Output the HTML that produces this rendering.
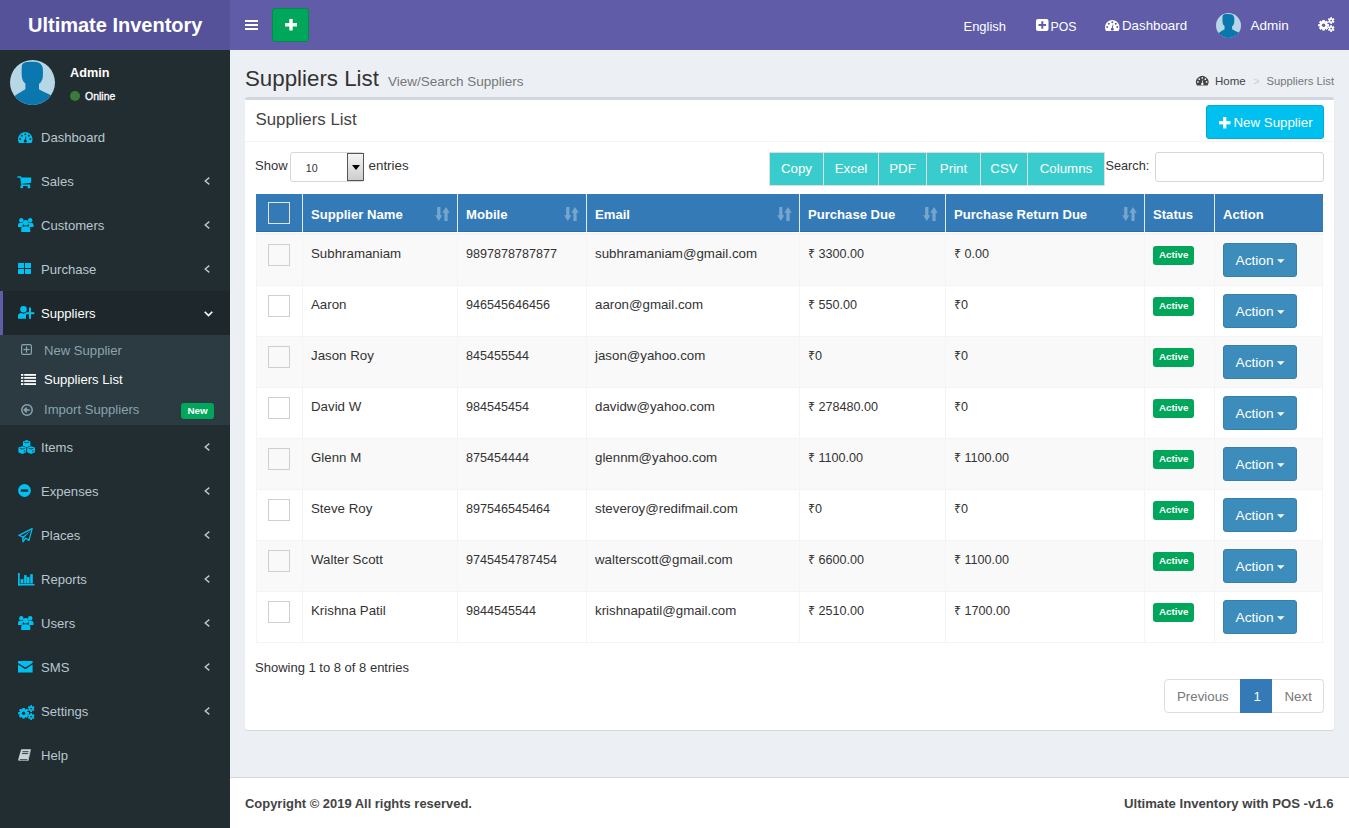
<!DOCTYPE html>
<html><head><meta charset="utf-8">
<style>
*{box-sizing:border-box;margin:0;padding:0}
html,body{width:1349px;height:828px;overflow:hidden}
body{position:relative;background:#ecf0f5;font-family:"Liberation Sans",sans-serif;color:#333;font-size:13px}
.a{position:absolute;white-space:nowrap}
svg.a{display:block;overflow:visible}
</style></head><body>

<div class="a" style="left:0px;top:0px;width:230px;height:50px;background:#555299"></div>
<div class="a" style="left:230px;top:0px;width:1119px;height:50px;background:#605ca8"></div>
<div class="a" style="left:28.00px;top:14.87px;font-size:20px;line-height:20px;color:#fff;font-weight:bold;">Ultimate Inventory</div>
<svg class="a" style="left:245px;top:20px;" width="13" height="10" viewBox="0 0 13 10"><g fill="#fff"><rect x="0" y="0" width="13" height="2"/><rect x="0" y="4" width="13" height="2"/><rect x="0" y="8" width="13" height="2"/></g></svg>
<div class="a" style="left:272px;top:8px;width:37px;height:34px;background:#00a65a;border:1px solid #008d4c;border-radius:3px"></div>
<svg class="a" style="left:285px;top:19px;" width="12" height="11.5" viewBox="0 0 12 11.5"><g fill="#fff"><rect x="4.3" y="0" width="3.4" height="11.5"/><rect x="0" y="4.1" width="12" height="3.4"/></g></svg>
<div class="a" style="left:963.50px;top:16.51px;font-size:12.95px;line-height:20px;color:#fff;font-weight:normal;">English</div>
<svg class="a" style="left:1035.5px;top:19px;" width="12.5" height="12" viewBox="0 0 12.5 12"><rect x="0" y="0" width="12.5" height="12" rx="2" fill="#fff"/><g fill="#605ca8"><rect x="5.3" y="2.3" width="2" height="7.4"/><rect x="2.5" y="5" width="7.5" height="2"/></g></svg>
<div class="a" style="left:1050.50px;top:16.74px;font-size:12.3px;line-height:20px;color:#fff;font-weight:normal;">POS</div>
<svg class="a" style="left:1105px;top:20px;" width="14.5" height="11" viewBox="0 0 14.5 11"><path d="M1.05 11 A7.25 7.25 0 1 1 13.45 11 Z" fill="#fff"/><g fill="#605ca8"><circle cx="7.3" cy="2.2" r="1"/><circle cx="3.8" cy="3.7" r="1"/><circle cx="10.8" cy="3.7" r="1"/><circle cx="2.2" cy="6.9" r="1"/><circle cx="12.3" cy="6.9" r="1"/><path d="M8.3 4.4 L7.8 4.3 L6.7 8.6 L7.9 8.9 Z"/><circle cx="7.3" cy="9.2" r="1.45"/></g></svg>
<div class="a" style="left:1122.00px;top:16.39px;font-size:13.3px;line-height:20px;color:#fff;font-weight:normal;">Dashboard</div>
<svg class="a" style="left:1216px;top:13px;" width="25" height="25" viewBox="0 0 45 45"><defs><clipPath id="cpa"><circle cx="22.5" cy="22.5" r="22.5"/></clipPath></defs><circle cx="22.5" cy="22.5" r="22.5" fill="#b7d7e6"/><g clip-path="url(#cpa)" fill="#0a77ae"><path d="M12 5 C13 2.5 16 1.8 22 1.8 C28 1.8 31 3 32.5 7 C33.2 10 33 14 32.8 17 C32.5 20 31 22.5 29 24 L29 29.3 C32 31.5 37 33 41 35.3 L50 50 L-5 50 L4.8 35.9 C8 33.5 12 31.5 15.4 29.3 L15.4 23.5 C13 21.5 12 19 11.8 16 C11.5 12 11.5 8 12 5 Z"/></g></svg>
<div class="a" style="left:1250.50px;top:16.32px;font-size:13.5px;line-height:20px;color:#fff;font-weight:normal;">Admin</div>
<svg class="a" style="left:1318px;top:17px;" width="17" height="15" viewBox="0 0 17 15"><circle cx="5.6" cy="8.2" r="4.0" fill="#fff"/><rect x="4.50" y="3.00" width="2.20" height="10.40" fill="#fff" transform="rotate(0.0 5.6 8.2)"/><rect x="4.50" y="3.00" width="2.20" height="10.40" fill="#fff" transform="rotate(45.0 5.6 8.2)"/><rect x="4.50" y="3.00" width="2.20" height="10.40" fill="#fff" transform="rotate(90.0 5.6 8.2)"/><rect x="4.50" y="3.00" width="2.20" height="10.40" fill="#fff" transform="rotate(135.0 5.6 8.2)"/><rect x="4.50" y="3.00" width="2.20" height="10.40" fill="#fff" transform="rotate(180.0 5.6 8.2)"/><rect x="4.50" y="3.00" width="2.20" height="10.40" fill="#fff" transform="rotate(225.0 5.6 8.2)"/><rect x="4.50" y="3.00" width="2.20" height="10.40" fill="#fff" transform="rotate(270.0 5.6 8.2)"/><rect x="4.50" y="3.00" width="2.20" height="10.40" fill="#fff" transform="rotate(315.0 5.6 8.2)"/><circle cx="5.6" cy="8.2" r="1.7" fill="#605ca8"/><circle cx="13.2" cy="3.6" r="2.4" fill="#fff"/><rect x="12.50" y="0.30" width="1.40" height="6.60" fill="#fff" transform="rotate(0.0 13.2 3.6)"/><rect x="12.50" y="0.30" width="1.40" height="6.60" fill="#fff" transform="rotate(60.0 13.2 3.6)"/><rect x="12.50" y="0.30" width="1.40" height="6.60" fill="#fff" transform="rotate(120.0 13.2 3.6)"/><rect x="12.50" y="0.30" width="1.40" height="6.60" fill="#fff" transform="rotate(180.0 13.2 3.6)"/><rect x="12.50" y="0.30" width="1.40" height="6.60" fill="#fff" transform="rotate(240.0 13.2 3.6)"/><rect x="12.50" y="0.30" width="1.40" height="6.60" fill="#fff" transform="rotate(300.0 13.2 3.6)"/><circle cx="13.2" cy="3.6" r="0.9" fill="#605ca8"/><circle cx="13.2" cy="11.6" r="2.4" fill="#fff"/><rect x="12.50" y="8.30" width="1.40" height="6.60" fill="#fff" transform="rotate(0.0 13.2 11.6)"/><rect x="12.50" y="8.30" width="1.40" height="6.60" fill="#fff" transform="rotate(60.0 13.2 11.6)"/><rect x="12.50" y="8.30" width="1.40" height="6.60" fill="#fff" transform="rotate(120.0 13.2 11.6)"/><rect x="12.50" y="8.30" width="1.40" height="6.60" fill="#fff" transform="rotate(180.0 13.2 11.6)"/><rect x="12.50" y="8.30" width="1.40" height="6.60" fill="#fff" transform="rotate(240.0 13.2 11.6)"/><rect x="12.50" y="8.30" width="1.40" height="6.60" fill="#fff" transform="rotate(300.0 13.2 11.6)"/><circle cx="13.2" cy="11.6" r="0.9" fill="#605ca8"/></svg>
<div class="a" style="left:0px;top:50px;width:230px;height:778px;background:#222d32"></div>
<svg class="a" style="left:10px;top:60px;" width="45" height="45" viewBox="0 0 45 45"><defs><clipPath id="cpb"><circle cx="22.5" cy="22.5" r="22.5"/></clipPath></defs><circle cx="22.5" cy="22.5" r="22.5" fill="#b7d7e6"/><g clip-path="url(#cpb)" fill="#0a77ae"><path d="M12 5 C13 2.5 16 1.8 22 1.8 C28 1.8 31 3 32.5 7 C33.2 10 33 14 32.8 17 C32.5 20 31 22.5 29 24 L29 29.3 C32 31.5 37 33 41 35.3 L50 50 L-5 50 L4.8 35.9 C8 33.5 12 31.5 15.4 29.3 L15.4 23.5 C13 21.5 12 19 11.8 16 C11.5 12 11.5 8 12 5 Z"/></g></svg>
<div class="a" style="left:70.00px;top:62.60px;font-size:12.7px;line-height:20px;color:#fff;font-weight:bold;">Admin</div>
<svg class="a" style="left:69.5px;top:91px;" width="10" height="10" viewBox="0 0 10 10"><circle cx="5" cy="5" r="5" fill="#3b7a3a"/></svg>
<div class="a" style="left:85.00px;top:86.36px;font-size:10.5px;line-height:20px;color:#fff;font-weight:normal;-webkit-text-stroke:0.3px #fff">Online</div>
<svg class="a" style="left:17.6px;top:132px;" width="14.5" height="11" viewBox="0 0 14.5 11"><path d="M1.05 11 A7.25 7.25 0 1 1 13.45 11 Z" fill="#00c0ef"/><g fill="#222d32"><circle cx="7.3" cy="2.2" r="1"/><circle cx="3.8" cy="3.7" r="1"/><circle cx="10.8" cy="3.7" r="1"/><circle cx="2.2" cy="6.9" r="1"/><circle cx="12.3" cy="6.9" r="1"/><path d="M8.3 4.4 L7.8 4.3 L6.7 8.6 L7.9 8.9 Z"/><circle cx="7.3" cy="9.2" r="1.45"/></g></svg>
<div class="a" style="left:41.00px;top:128.46px;font-size:13.1px;line-height:20px;color:#b8c7ce;font-weight:normal;">Dashboard</div>
<svg class="a" style="left:17px;top:176px;" width="15" height="13" viewBox="0 0 15 13"><path d="M0.4 0.2 H4 L4.4 1.6 H14.2 V6.8 L5.6 7.8 L5.9 8.4 H13.2 V10 H4.6 L3.1 1.7 H0.4 Z" fill="#00c0ef"/><g fill="#00c0ef"><rect x="3.4" y="9.6" width="2.6" height="2.6" rx="0.4"/><rect x="10.6" y="9.6" width="2.6" height="2.6" rx="0.4"/></g></svg>
<div class="a" style="left:41.00px;top:172.46px;font-size:13.1px;line-height:20px;color:#b8c7ce;font-weight:normal;">Sales</div>
<svg class="a" style="left:204.3px;top:177.3px;" width="6" height="8" viewBox="0 0 6 8"><path d="M5.3 0.6 L1.2 4 L5.3 7.4" stroke="#b8c7ce" stroke-width="1.4" fill="none"/></svg>
<svg class="a" style="left:17.8px;top:218px;" width="15.5" height="14" viewBox="0 0 15.5 14"><g fill="#00c0ef"><circle cx="3.3" cy="2.3" r="2.2"/><circle cx="12.2" cy="2.3" r="2.2"/><path d="M0 9 V7 C0 5.3 1 4.8 3.3 4.8 C4.6 4.8 5.2 5 5.5 5.3 C4.9 6.2 4.6 7.2 4.6 9 Z"/><path d="M15.5 9 V7 C15.5 5.3 14.5 4.8 12.2 4.8 C10.9 4.8 10.3 5 10 5.3 C10.6 6.2 10.9 7.2 10.9 9 Z"/><circle cx="7.75" cy="4.8" r="2.8"/><path d="M3.2 14 V11 C3.2 9 4.5 8.2 7.75 8.2 C11 8.2 12.3 9 12.3 11 V14 Z"/></g></svg>
<div class="a" style="left:41.00px;top:216.46px;font-size:13.1px;line-height:20px;color:#b8c7ce;font-weight:normal;">Customers</div>
<svg class="a" style="left:204.3px;top:221.3px;" width="6" height="8" viewBox="0 0 6 8"><path d="M5.3 0.6 L1.2 4 L5.3 7.4" stroke="#b8c7ce" stroke-width="1.4" fill="none"/></svg>
<svg class="a" style="left:18px;top:263px;" width="13" height="11" viewBox="0 0 13 11"><g fill="#00c0ef"><rect x="0" y="0" width="6" height="5"/><rect x="7" y="0" width="6" height="5"/><rect x="0" y="6" width="6" height="5"/><rect x="7" y="6" width="6" height="5"/></g></svg>
<div class="a" style="left:41.00px;top:260.46px;font-size:13.1px;line-height:20px;color:#b8c7ce;font-weight:normal;">Purchase</div>
<svg class="a" style="left:204.3px;top:265.3px;" width="6" height="8" viewBox="0 0 6 8"><path d="M5.3 0.6 L1.2 4 L5.3 7.4" stroke="#b8c7ce" stroke-width="1.4" fill="none"/></svg>
<div class="a" style="left:0px;top:291px;width:230px;height:44px;background:#1e282c;border-left:3px solid #605ca8"></div>
<svg class="a" style="left:17.8px;top:306px;" width="16.4" height="13" viewBox="0 0 16.4 13"><g fill="#00c0ef"><circle cx="5.5" cy="3.3" r="3.3"/><path d="M0 12.8 V10 C0 7.8 1.5 7 3.5 7 L5.5 7.8 L7.5 7 C8.5 7 9 7.2 9.5 7.6 L8 8.5 V12.8 Z"/><rect x="11" y="1.5" width="2" height="11.3"/><rect x="8.1" y="6.2" width="8.2" height="2"/></g></svg>
<div class="a" style="left:41.00px;top:304.46px;font-size:13.1px;line-height:20px;color:#fff;font-weight:normal;">Suppliers</div>
<svg class="a" style="left:203.5px;top:310.5px;" width="9" height="6" viewBox="0 0 9 6"><path d="M0.7 0.8 L4.5 4.6 L8.3 0.8" stroke="#fff" stroke-width="1.6" fill="none"/></svg>
<div class="a" style="left:0px;top:335px;width:230px;height:90px;background:#2c3b41"></div>
<svg class="a" style="left:20.9px;top:344.3px;" width="11" height="11" viewBox="0 0 11 11"><rect x="0.6" y="0.6" width="9.8" height="9.8" rx="1.6" stroke="#8aa4af" stroke-width="1.2" fill="none"/><g fill="#8aa4af"><rect x="4.9" y="2.4" width="1.2" height="6.2"/><rect x="2.4" y="4.9" width="6.2" height="1.2"/></g></svg>
<div class="a" style="left:44.00px;top:340.86px;font-size:13.1px;line-height:20px;color:#8aa4af;font-weight:normal;">New Supplier</div>
<svg class="a" style="left:20.6px;top:374px;" width="15" height="11" viewBox="0 0 15 11"><g fill="#fff"><rect x="0" y="0" width="2.3" height="1.8"/><rect x="3.2" y="0" width="11.8" height="1.8"/><rect x="0" y="3" width="2.3" height="1.8"/><rect x="3.2" y="3" width="11.8" height="1.8"/><rect x="0" y="6.1" width="2.3" height="1.8"/><rect x="3.2" y="6.1" width="11.8" height="1.8"/><rect x="0" y="9.2" width="2.3" height="1.8"/><rect x="3.2" y="9.2" width="11.8" height="1.8"/></g></svg>
<div class="a" style="left:44.00px;top:370.16px;font-size:13.1px;line-height:20px;color:#fff;font-weight:normal;">Suppliers List</div>
<svg class="a" style="left:21px;top:404.3px;" width="12" height="12" viewBox="0 0 12 12"><circle cx="6" cy="6" r="5.2" stroke="#8aa4af" stroke-width="1.5" fill="none"/><path d="M8.8 6 H3.6 M5.8 3.6 L3.4 6 L5.8 8.4" stroke="#8aa4af" stroke-width="1.7" fill="none"/></svg>
<div class="a" style="left:44.00px;top:400.36px;font-size:13.1px;line-height:20px;color:#8aa4af;font-weight:normal;">Import Suppliers</div>
<div class="a" style="left:181px;top:403px;width:33px;height:16px;background:#00a65a;border-radius:3px"></div>
<div class="a" style="left:187.50px;top:401.10px;font-size:9.8px;line-height:20px;color:#fff;font-weight:bold;">New</div>
<svg class="a" style="left:17.8px;top:440px;" width="17.4" height="14" viewBox="0 0 17.4 14"><g fill="#00c0ef"><path d="M8.7 0 L12.4 1.4 V5.8 L8.7 7.2 L5 5.8 V1.4 Z"/><path d="M4.5 6.2 L8.2 7.6 V12.3 L4.5 14 L0.4 12.3 V7.6 Z"/><path d="M12.9 6.2 L17 7.6 V12.3 L12.9 14 L9.2 12.3 V7.6 Z"/></g><g stroke="#222d32" stroke-width="0.9" fill="none"><path d="M6.3 2 L8.7 2.9 L11.1 2"/><path d="M2 8.2 L4.5 9.1 L7 8.2 M6.8 10.3 L6.2 12"/><path d="M10.6 8.2 L13 9.1 L15.5 8.2 M15.2 10.3 L14.6 12"/></g></svg>
<div class="a" style="left:41.00px;top:438.46px;font-size:13.1px;line-height:20px;color:#b8c7ce;font-weight:normal;">Items</div>
<svg class="a" style="left:204.3px;top:443.3px;" width="6" height="8" viewBox="0 0 6 8"><path d="M5.3 0.6 L1.2 4 L5.3 7.4" stroke="#b8c7ce" stroke-width="1.4" fill="none"/></svg>
<svg class="a" style="left:17.6px;top:484px;" width="13" height="13" viewBox="0 0 13 13"><circle cx="6.5" cy="6.5" r="6.4" fill="#00c0ef"/><rect x="2.8" y="5.4" width="7.4" height="2.3" fill="#222d32"/></svg>
<div class="a" style="left:41.00px;top:482.46px;font-size:13.1px;line-height:20px;color:#b8c7ce;font-weight:normal;">Expenses</div>
<svg class="a" style="left:204.3px;top:487.3px;" width="6" height="8" viewBox="0 0 6 8"><path d="M5.3 0.6 L1.2 4 L5.3 7.4" stroke="#b8c7ce" stroke-width="1.4" fill="none"/></svg>
<svg class="a" style="left:17.5px;top:527.8px;" width="15" height="14.4" viewBox="0 0 15 14.4"><path d="M14.2 0.6 L0.9 7.4 L4.6 8.7 L5 13.8 L7.6 10.1 L10.9 12.6 Z" stroke="#00c0ef" stroke-width="1.2" fill="none" stroke-linejoin="round"/><path d="M4.6 8.7 L13 2.5 L5.5 10.3 L5 13.8 Z" fill="#00c0ef"/></svg>
<div class="a" style="left:41.00px;top:526.46px;font-size:13.1px;line-height:20px;color:#b8c7ce;font-weight:normal;">Places</div>
<svg class="a" style="left:204.3px;top:531.3px;" width="6" height="8" viewBox="0 0 6 8"><path d="M5.3 0.6 L1.2 4 L5.3 7.4" stroke="#b8c7ce" stroke-width="1.4" fill="none"/></svg>
<svg class="a" style="left:17.5px;top:572.6px;" width="16.5" height="12.5" viewBox="0 0 16.5 12.5"><g fill="#00c0ef"><rect x="0" y="0" width="1.7" height="12.5"/><rect x="0" y="11" width="16.5" height="1.5"/><rect x="2.6" y="6.1" width="2.9" height="4.4"/><rect x="6.1" y="2.1" width="2.6" height="8.4"/><rect x="9" y="4.1" width="2.6" height="6.4"/><rect x="12.2" y="1.2" width="2.6" height="9.3"/></g></svg>
<div class="a" style="left:41.00px;top:570.46px;font-size:13.1px;line-height:20px;color:#b8c7ce;font-weight:normal;">Reports</div>
<svg class="a" style="left:204.3px;top:575.3px;" width="6" height="8" viewBox="0 0 6 8"><path d="M5.3 0.6 L1.2 4 L5.3 7.4" stroke="#b8c7ce" stroke-width="1.4" fill="none"/></svg>
<svg class="a" style="left:17.8px;top:616px;" width="15.5" height="14" viewBox="0 0 15.5 14"><g fill="#00c0ef"><circle cx="3.3" cy="2.3" r="2.2"/><circle cx="12.2" cy="2.3" r="2.2"/><path d="M0 9 V7 C0 5.3 1 4.8 3.3 4.8 C4.6 4.8 5.2 5 5.5 5.3 C4.9 6.2 4.6 7.2 4.6 9 Z"/><path d="M15.5 9 V7 C15.5 5.3 14.5 4.8 12.2 4.8 C10.9 4.8 10.3 5 10 5.3 C10.6 6.2 10.9 7.2 10.9 9 Z"/><circle cx="7.75" cy="4.8" r="2.8"/><path d="M3.2 14 V11 C3.2 9 4.5 8.2 7.75 8.2 C11 8.2 12.3 9 12.3 11 V14 Z"/></g></svg>
<div class="a" style="left:41.00px;top:614.46px;font-size:13.1px;line-height:20px;color:#b8c7ce;font-weight:normal;">Users</div>
<svg class="a" style="left:204.3px;top:619.3px;" width="6" height="8" viewBox="0 0 6 8"><path d="M5.3 0.6 L1.2 4 L5.3 7.4" stroke="#b8c7ce" stroke-width="1.4" fill="none"/></svg>
<svg class="a" style="left:17.8px;top:660.8px;" width="14.6" height="11.5" viewBox="0 0 14.6 11.5"><path d="M0 0 H14.6 V2 L7.3 6.6 L0 2 Z M0 3.6 L7.3 8.2 L14.6 3.6 V11.5 H0 Z" fill="#00c0ef"/></svg>
<div class="a" style="left:41.00px;top:658.46px;font-size:13.1px;line-height:20px;color:#b8c7ce;font-weight:normal;">SMS</div>
<svg class="a" style="left:204.3px;top:663.3px;" width="6" height="8" viewBox="0 0 6 8"><path d="M5.3 0.6 L1.2 4 L5.3 7.4" stroke="#b8c7ce" stroke-width="1.4" fill="none"/></svg>
<svg class="a" style="left:17.8px;top:704.5px;" width="17" height="15" viewBox="0 0 17 15"><circle cx="5.6" cy="8.2" r="4.0" fill="#00c0ef"/><rect x="4.50" y="3.00" width="2.20" height="10.40" fill="#00c0ef" transform="rotate(0.0 5.6 8.2)"/><rect x="4.50" y="3.00" width="2.20" height="10.40" fill="#00c0ef" transform="rotate(45.0 5.6 8.2)"/><rect x="4.50" y="3.00" width="2.20" height="10.40" fill="#00c0ef" transform="rotate(90.0 5.6 8.2)"/><rect x="4.50" y="3.00" width="2.20" height="10.40" fill="#00c0ef" transform="rotate(135.0 5.6 8.2)"/><rect x="4.50" y="3.00" width="2.20" height="10.40" fill="#00c0ef" transform="rotate(180.0 5.6 8.2)"/><rect x="4.50" y="3.00" width="2.20" height="10.40" fill="#00c0ef" transform="rotate(225.0 5.6 8.2)"/><rect x="4.50" y="3.00" width="2.20" height="10.40" fill="#00c0ef" transform="rotate(270.0 5.6 8.2)"/><rect x="4.50" y="3.00" width="2.20" height="10.40" fill="#00c0ef" transform="rotate(315.0 5.6 8.2)"/><circle cx="5.6" cy="8.2" r="1.7" fill="#222d32"/><circle cx="13.2" cy="3.6" r="2.4" fill="#00c0ef"/><rect x="12.50" y="0.30" width="1.40" height="6.60" fill="#00c0ef" transform="rotate(0.0 13.2 3.6)"/><rect x="12.50" y="0.30" width="1.40" height="6.60" fill="#00c0ef" transform="rotate(60.0 13.2 3.6)"/><rect x="12.50" y="0.30" width="1.40" height="6.60" fill="#00c0ef" transform="rotate(120.0 13.2 3.6)"/><rect x="12.50" y="0.30" width="1.40" height="6.60" fill="#00c0ef" transform="rotate(180.0 13.2 3.6)"/><rect x="12.50" y="0.30" width="1.40" height="6.60" fill="#00c0ef" transform="rotate(240.0 13.2 3.6)"/><rect x="12.50" y="0.30" width="1.40" height="6.60" fill="#00c0ef" transform="rotate(300.0 13.2 3.6)"/><circle cx="13.2" cy="3.6" r="0.9" fill="#222d32"/><circle cx="13.2" cy="11.6" r="2.4" fill="#00c0ef"/><rect x="12.50" y="8.30" width="1.40" height="6.60" fill="#00c0ef" transform="rotate(0.0 13.2 11.6)"/><rect x="12.50" y="8.30" width="1.40" height="6.60" fill="#00c0ef" transform="rotate(60.0 13.2 11.6)"/><rect x="12.50" y="8.30" width="1.40" height="6.60" fill="#00c0ef" transform="rotate(120.0 13.2 11.6)"/><rect x="12.50" y="8.30" width="1.40" height="6.60" fill="#00c0ef" transform="rotate(180.0 13.2 11.6)"/><rect x="12.50" y="8.30" width="1.40" height="6.60" fill="#00c0ef" transform="rotate(240.0 13.2 11.6)"/><rect x="12.50" y="8.30" width="1.40" height="6.60" fill="#00c0ef" transform="rotate(300.0 13.2 11.6)"/><circle cx="13.2" cy="11.6" r="0.9" fill="#222d32"/></svg>
<div class="a" style="left:41.00px;top:702.46px;font-size:13.1px;line-height:20px;color:#b8c7ce;font-weight:normal;">Settings</div>
<svg class="a" style="left:204.3px;top:707.3px;" width="6" height="8" viewBox="0 0 6 8"><path d="M5.3 0.6 L1.2 4 L5.3 7.4" stroke="#b8c7ce" stroke-width="1.4" fill="none"/></svg>
<svg class="a" style="left:17.5px;top:748.5px;" width="13" height="12.5" viewBox="0 0 13 12.5"><path d="M3.2 0.3 H12.6 L10 11.8 H1.2 C0.2 11.8 0 10.8 0.4 9.8 Z" fill="#c9d3d8"/><g stroke="#222d32" stroke-width="0.9"><path d="M4.4 2.7 H10.5 M4 4.6 H10.1 M1.8 10.7 H9.4"/></g><path d="M12.6 0.3 L10 11.8" stroke="#b8c7ce" stroke-width="0.8"/></svg>
<div class="a" style="left:41.00px;top:746.46px;font-size:13.1px;line-height:20px;color:#b8c7ce;font-weight:normal;">Help</div>
<div class="a" style="left:245.00px;top:68.97px;font-size:22.3px;line-height:20px;color:#333;font-weight:normal;">Suppliers List</div>
<div class="a" style="left:388.00px;top:72.02px;font-size:13.5px;line-height:20px;color:#777;font-weight:normal;">View/Search Suppliers</div>
<svg class="a" style="left:1196px;top:76px;" width="12.5" height="9.5" viewBox="0 0 14.5 11"><path d="M1.05 11 A7.25 7.25 0 1 1 13.45 11 Z" fill="#444"/><g fill="#ecf0f5"><circle cx="7.3" cy="2.2" r="1"/><circle cx="3.8" cy="3.7" r="1"/><circle cx="10.8" cy="3.7" r="1"/><circle cx="2.2" cy="6.9" r="1"/><circle cx="12.3" cy="6.9" r="1"/><path d="M8.3 4.4 L7.8 4.3 L6.7 8.6 L7.9 8.9 Z"/><circle cx="7.3" cy="9.2" r="1.45"/></g></svg>
<div class="a" style="left:1215.00px;top:71.02px;font-size:11.5px;line-height:20px;color:#444;font-weight:normal;">Home</div>
<div class="a" style="left:1253.50px;top:71.36px;font-size:10.5px;line-height:20px;color:#ccc;font-weight:normal;">&gt;</div>
<div class="a" style="left:1266.50px;top:71.10px;font-size:11.25px;line-height:20px;color:#777;font-weight:normal;">Suppliers List</div>
<div class="a" style="left:245px;top:97px;width:1089px;height:633px;background:#fff;border-top:3px solid #d2d6de;border-radius:3px;box-shadow:0 1px 1px rgba(0,0,0,.1)"></div>
<div class="a" style="left:255.50px;top:110.16px;font-size:16.85px;line-height:20px;color:#444;font-weight:normal;">Suppliers List</div>
<div class="a" style="left:245px;top:141px;width:1089px;height:1px;background:#f4f4f4"></div>
<div class="a" style="left:1206px;top:105px;width:118px;height:34px;background:#00c0ef;border:1px solid #00acd6;border-radius:3px"></div>
<svg class="a" style="left:1219px;top:116.5px;" width="11.5" height="11.5" viewBox="0 0 11.5 11.5"><g fill="#fff"><rect x="4.15" y="0" width="3.2" height="11.5"/><rect x="0" y="4.15" width="11.5" height="3.2"/></g></svg>
<div class="a" style="left:1233.50px;top:113.39px;font-size:13.3px;line-height:20px;color:#fff;font-weight:normal;">New Supplier</div>
<div class="a" style="left:255.00px;top:155.80px;font-size:13px;line-height:20px;color:#333;font-weight:normal;">Show</div>
<div class="a" style="left:290px;top:152px;width:74px;height:30px;background:#fff;border:1px solid #d2d6de;border-radius:3px"></div>
<div class="a" style="left:305.80px;top:157.93px;font-size:10.6px;line-height:20px;color:#333;font-weight:normal;">10</div>
<div class="a" style="left:347px;top:153px;width:17px;height:28px;border:1px solid #555;background:linear-gradient(#f4f4f4,#cdcdcd)"></div>
<svg class="a" style="left:351.5px;top:165px;" width="8" height="5" viewBox="0 0 8 5"><path d="M0 0 H8 L4 5 Z" fill="#000"/></svg>
<div class="a" style="left:368.50px;top:155.66px;font-size:13.4px;line-height:20px;color:#333;font-weight:normal;">entries</div>
<div class="a" style="left:769px;top:152px;width:55px;height:34px;background:#39cccc;border:1px solid #ddd"></div>
<div class="a" style="left:823px;top:152px;width:56px;height:34px;background:#39cccc;border:1px solid #ddd"></div>
<div class="a" style="left:878px;top:152px;width:49px;height:34px;background:#39cccc;border:1px solid #ddd"></div>
<div class="a" style="left:926px;top:152px;width:55px;height:34px;background:#39cccc;border:1px solid #ddd"></div>
<div class="a" style="left:980px;top:152px;width:48px;height:34px;background:#39cccc;border:1px solid #ddd"></div>
<div class="a" style="left:1027px;top:152px;width:78px;height:34px;background:#39cccc;border:1px solid #ddd"></div>
<div class="a" style="left:769px;top:158.89px;width:55px;text-align:center;font-size:13.3px;line-height:20px;color:#fff">Copy</div>
<div class="a" style="left:823px;top:158.89px;width:56px;text-align:center;font-size:13.3px;line-height:20px;color:#fff">Excel</div>
<div class="a" style="left:878px;top:158.89px;width:49px;text-align:center;font-size:13.3px;line-height:20px;color:#fff">PDF</div>
<div class="a" style="left:926px;top:158.89px;width:55px;text-align:center;font-size:13.3px;line-height:20px;color:#fff">Print</div>
<div class="a" style="left:980px;top:158.89px;width:48px;text-align:center;font-size:13.3px;line-height:20px;color:#fff">CSV</div>
<div class="a" style="left:1027px;top:158.89px;width:78px;text-align:center;font-size:13.3px;line-height:20px;color:#fff">Columns</div>
<div class="a" style="left:1105.50px;top:156.20px;font-size:12.7px;line-height:20px;color:#333;font-weight:normal;">Search:</div>
<div class="a" style="left:1155px;top:152px;width:169px;height:30px;background:#fff;border:1px solid #d2d6de;border-radius:3px"></div>
<div class="a" style="left:256px;top:194px;width:1067px;height:38px;background:#337ab7;border-bottom:1px solid #2e6da4"></div>
<div class="a" style="left:302px;top:194px;width:1px;height:38px;background:#fff;opacity:.85"></div>
<div class="a" style="left:457px;top:194px;width:1px;height:38px;background:#fff;opacity:.85"></div>
<div class="a" style="left:586px;top:194px;width:1px;height:38px;background:#fff;opacity:.85"></div>
<div class="a" style="left:799px;top:194px;width:1px;height:38px;background:#fff;opacity:.85"></div>
<div class="a" style="left:945px;top:194px;width:1px;height:38px;background:#fff;opacity:.85"></div>
<div class="a" style="left:1144px;top:194px;width:1px;height:38px;background:#fff;opacity:.85"></div>
<div class="a" style="left:1214px;top:194px;width:1px;height:38px;background:#fff;opacity:.85"></div>
<div class="a" style="left:256px;top:232px;width:1067px;height:1px;background:#fffdf9"></div>
<div class="a" style="left:256px;top:233px;width:1067px;height:2px;background:#f4f4f4"></div>
<div class="a" style="left:311.00px;top:205.36px;font-size:13.1px;line-height:20px;color:#fff;font-weight:bold;">Supplier Name</div>
<div class="a" style="left:466.00px;top:205.36px;font-size:13.1px;line-height:20px;color:#fff;font-weight:bold;">Mobile</div>
<div class="a" style="left:595.00px;top:205.36px;font-size:13.1px;line-height:20px;color:#fff;font-weight:bold;">Email</div>
<div class="a" style="left:808.00px;top:205.36px;font-size:13.1px;line-height:20px;color:#fff;font-weight:bold;">Purchase Due</div>
<div class="a" style="left:954.00px;top:205.36px;font-size:13.1px;line-height:20px;color:#fff;font-weight:bold;">Purchase Return Due</div>
<div class="a" style="left:1153.00px;top:205.36px;font-size:13.1px;line-height:20px;color:#fff;font-weight:bold;">Status</div>
<div class="a" style="left:1223.00px;top:205.36px;font-size:13.1px;line-height:20px;color:#fff;font-weight:bold;">Action</div>
<div class="a" style="left:268px;top:202px;width:22px;height:22px;border:1px solid #e3e3e3"></div>
<svg class="a" style="left:435px;top:206.8px;" width="15" height="14" viewBox="0 0 15 14"><g fill="#fff" opacity=".33"><path d="M2.2 0 H5.4 V8.2 H7.4 L3.8 14 L0.2 8.2 H2.2 Z"/><path d="M9.4 14 H12.6 V5.8 H14.8 L11 0 L7.3 5.8 H9.4 Z"/></g></svg>
<svg class="a" style="left:564px;top:206.8px;" width="15" height="14" viewBox="0 0 15 14"><g fill="#fff" opacity=".33"><path d="M2.2 0 H5.4 V8.2 H7.4 L3.8 14 L0.2 8.2 H2.2 Z"/><path d="M9.4 14 H12.6 V5.8 H14.8 L11 0 L7.3 5.8 H9.4 Z"/></g></svg>
<svg class="a" style="left:777px;top:206.8px;" width="15" height="14" viewBox="0 0 15 14"><g fill="#fff" opacity=".33"><path d="M2.2 0 H5.4 V8.2 H7.4 L3.8 14 L0.2 8.2 H2.2 Z"/><path d="M9.4 14 H12.6 V5.8 H14.8 L11 0 L7.3 5.8 H9.4 Z"/></g></svg>
<svg class="a" style="left:923px;top:206.8px;" width="15" height="14" viewBox="0 0 15 14"><g fill="#fff" opacity=".33"><path d="M2.2 0 H5.4 V8.2 H7.4 L3.8 14 L0.2 8.2 H2.2 Z"/><path d="M9.4 14 H12.6 V5.8 H14.8 L11 0 L7.3 5.8 H9.4 Z"/></g></svg>
<svg class="a" style="left:1122px;top:206.8px;" width="15" height="14" viewBox="0 0 15 14"><g fill="#fff" opacity=".33"><path d="M2.2 0 H5.4 V8.2 H7.4 L3.8 14 L0.2 8.2 H2.2 Z"/><path d="M9.4 14 H12.6 V5.8 H14.8 L11 0 L7.3 5.8 H9.4 Z"/></g></svg>
<div class="a" style="left:256px;top:235px;width:1067px;height:50px;background:#f9f9f9"></div>
<div class="a" style="left:256px;top:285px;width:1067px;height:1px;background:#f4f4f4"></div>
<div class="a" style="left:268px;top:244px;width:22px;height:22px;border:1px solid #d3cfc8"></div>
<div class="a" style="left:311.00px;top:244.39px;font-size:13.3px;line-height:20px;color:#333;font-weight:normal;">Subhramaniam</div>
<div class="a" style="left:466.00px;top:244.03px;font-size:12.6px;line-height:20px;color:#333;font-weight:normal;">9897878787877</div>
<div class="a" style="left:595.00px;top:244.39px;font-size:13.3px;line-height:20px;color:#333;font-weight:normal;">subhramaniam@gmail.com</div>
<div class="a" style="left:808.00px;top:244.03px;font-size:12.6px;line-height:20px;color:#333;font-weight:normal;">₹ 3300.00</div>
<div class="a" style="left:954.00px;top:244.03px;font-size:12.6px;line-height:20px;color:#333;font-weight:normal;">₹ 0.00</div>
<div class="a" style="left:1153px;top:246px;width:41px;height:19px;background:#00a65a;border-radius:3px"></div>
<div class="a" style="left:1159.00px;top:244.60px;font-size:9.8px;line-height:20px;color:#fff;font-weight:bold;">Active</div>
<div class="a" style="left:1223px;top:243px;width:74px;height:34px;background:#3c8dbc;border:1px solid #367fa9;border-radius:3px"></div>
<div class="a" style="left:1235.50px;top:251.25px;font-size:13.7px;line-height:20px;color:#fff;font-weight:normal;">Action</div>
<svg class="a" style="left:1276.5px;top:259px;" width="7.5" height="4" viewBox="0 0 8 4"><path d="M0 0 H8 L4 4 Z" fill="#fff"/></svg>
<div class="a" style="left:256px;top:286px;width:1067px;height:50px;background:#fff"></div>
<div class="a" style="left:256px;top:336px;width:1067px;height:1px;background:#f4f4f4"></div>
<div class="a" style="left:268px;top:295px;width:22px;height:22px;border:1px solid #d3cfc8"></div>
<div class="a" style="left:311.00px;top:295.39px;font-size:13.3px;line-height:20px;color:#333;font-weight:normal;">Aaron</div>
<div class="a" style="left:466.00px;top:295.03px;font-size:12.6px;line-height:20px;color:#333;font-weight:normal;">946545646456</div>
<div class="a" style="left:595.00px;top:295.39px;font-size:13.3px;line-height:20px;color:#333;font-weight:normal;">aaron@gmail.com</div>
<div class="a" style="left:808.00px;top:295.03px;font-size:12.6px;line-height:20px;color:#333;font-weight:normal;">₹ 550.00</div>
<div class="a" style="left:954.00px;top:295.03px;font-size:12.6px;line-height:20px;color:#333;font-weight:normal;">₹0</div>
<div class="a" style="left:1153px;top:297px;width:41px;height:19px;background:#00a65a;border-radius:3px"></div>
<div class="a" style="left:1159.00px;top:295.60px;font-size:9.8px;line-height:20px;color:#fff;font-weight:bold;">Active</div>
<div class="a" style="left:1223px;top:294px;width:74px;height:34px;background:#3c8dbc;border:1px solid #367fa9;border-radius:3px"></div>
<div class="a" style="left:1235.50px;top:302.25px;font-size:13.7px;line-height:20px;color:#fff;font-weight:normal;">Action</div>
<svg class="a" style="left:1276.5px;top:310px;" width="7.5" height="4" viewBox="0 0 8 4"><path d="M0 0 H8 L4 4 Z" fill="#fff"/></svg>
<div class="a" style="left:256px;top:337px;width:1067px;height:50px;background:#f9f9f9"></div>
<div class="a" style="left:256px;top:387px;width:1067px;height:1px;background:#f4f4f4"></div>
<div class="a" style="left:268px;top:346px;width:22px;height:22px;border:1px solid #d3cfc8"></div>
<div class="a" style="left:311.00px;top:346.39px;font-size:13.3px;line-height:20px;color:#333;font-weight:normal;">Jason Roy</div>
<div class="a" style="left:466.00px;top:346.03px;font-size:12.6px;line-height:20px;color:#333;font-weight:normal;">845455544</div>
<div class="a" style="left:595.00px;top:346.39px;font-size:13.3px;line-height:20px;color:#333;font-weight:normal;">jason@yahoo.com</div>
<div class="a" style="left:808.00px;top:346.03px;font-size:12.6px;line-height:20px;color:#333;font-weight:normal;">₹0</div>
<div class="a" style="left:954.00px;top:346.03px;font-size:12.6px;line-height:20px;color:#333;font-weight:normal;">₹0</div>
<div class="a" style="left:1153px;top:348px;width:41px;height:19px;background:#00a65a;border-radius:3px"></div>
<div class="a" style="left:1159.00px;top:346.60px;font-size:9.8px;line-height:20px;color:#fff;font-weight:bold;">Active</div>
<div class="a" style="left:1223px;top:345px;width:74px;height:34px;background:#3c8dbc;border:1px solid #367fa9;border-radius:3px"></div>
<div class="a" style="left:1235.50px;top:353.25px;font-size:13.7px;line-height:20px;color:#fff;font-weight:normal;">Action</div>
<svg class="a" style="left:1276.5px;top:361px;" width="7.5" height="4" viewBox="0 0 8 4"><path d="M0 0 H8 L4 4 Z" fill="#fff"/></svg>
<div class="a" style="left:256px;top:388px;width:1067px;height:50px;background:#fff"></div>
<div class="a" style="left:256px;top:438px;width:1067px;height:1px;background:#f4f4f4"></div>
<div class="a" style="left:268px;top:397px;width:22px;height:22px;border:1px solid #d3cfc8"></div>
<div class="a" style="left:311.00px;top:397.39px;font-size:13.3px;line-height:20px;color:#333;font-weight:normal;">David W</div>
<div class="a" style="left:466.00px;top:397.03px;font-size:12.6px;line-height:20px;color:#333;font-weight:normal;">984545454</div>
<div class="a" style="left:595.00px;top:397.39px;font-size:13.3px;line-height:20px;color:#333;font-weight:normal;">davidw@yahoo.com</div>
<div class="a" style="left:808.00px;top:397.03px;font-size:12.6px;line-height:20px;color:#333;font-weight:normal;">₹ 278480.00</div>
<div class="a" style="left:954.00px;top:397.03px;font-size:12.6px;line-height:20px;color:#333;font-weight:normal;">₹0</div>
<div class="a" style="left:1153px;top:399px;width:41px;height:19px;background:#00a65a;border-radius:3px"></div>
<div class="a" style="left:1159.00px;top:397.60px;font-size:9.8px;line-height:20px;color:#fff;font-weight:bold;">Active</div>
<div class="a" style="left:1223px;top:396px;width:74px;height:34px;background:#3c8dbc;border:1px solid #367fa9;border-radius:3px"></div>
<div class="a" style="left:1235.50px;top:404.25px;font-size:13.7px;line-height:20px;color:#fff;font-weight:normal;">Action</div>
<svg class="a" style="left:1276.5px;top:412px;" width="7.5" height="4" viewBox="0 0 8 4"><path d="M0 0 H8 L4 4 Z" fill="#fff"/></svg>
<div class="a" style="left:256px;top:439px;width:1067px;height:50px;background:#f9f9f9"></div>
<div class="a" style="left:256px;top:489px;width:1067px;height:1px;background:#f4f4f4"></div>
<div class="a" style="left:268px;top:448px;width:22px;height:22px;border:1px solid #d3cfc8"></div>
<div class="a" style="left:311.00px;top:448.39px;font-size:13.3px;line-height:20px;color:#333;font-weight:normal;">Glenn M</div>
<div class="a" style="left:466.00px;top:448.03px;font-size:12.6px;line-height:20px;color:#333;font-weight:normal;">875454444</div>
<div class="a" style="left:595.00px;top:448.39px;font-size:13.3px;line-height:20px;color:#333;font-weight:normal;">glennm@yahoo.com</div>
<div class="a" style="left:808.00px;top:448.03px;font-size:12.6px;line-height:20px;color:#333;font-weight:normal;">₹ 1100.00</div>
<div class="a" style="left:954.00px;top:448.03px;font-size:12.6px;line-height:20px;color:#333;font-weight:normal;">₹ 1100.00</div>
<div class="a" style="left:1153px;top:450px;width:41px;height:19px;background:#00a65a;border-radius:3px"></div>
<div class="a" style="left:1159.00px;top:448.60px;font-size:9.8px;line-height:20px;color:#fff;font-weight:bold;">Active</div>
<div class="a" style="left:1223px;top:447px;width:74px;height:34px;background:#3c8dbc;border:1px solid #367fa9;border-radius:3px"></div>
<div class="a" style="left:1235.50px;top:455.25px;font-size:13.7px;line-height:20px;color:#fff;font-weight:normal;">Action</div>
<svg class="a" style="left:1276.5px;top:463px;" width="7.5" height="4" viewBox="0 0 8 4"><path d="M0 0 H8 L4 4 Z" fill="#fff"/></svg>
<div class="a" style="left:256px;top:490px;width:1067px;height:50px;background:#fff"></div>
<div class="a" style="left:256px;top:540px;width:1067px;height:1px;background:#f4f4f4"></div>
<div class="a" style="left:268px;top:499px;width:22px;height:22px;border:1px solid #d3cfc8"></div>
<div class="a" style="left:311.00px;top:499.39px;font-size:13.3px;line-height:20px;color:#333;font-weight:normal;">Steve Roy</div>
<div class="a" style="left:466.00px;top:499.03px;font-size:12.6px;line-height:20px;color:#333;font-weight:normal;">897546545464</div>
<div class="a" style="left:595.00px;top:499.39px;font-size:13.3px;line-height:20px;color:#333;font-weight:normal;">steveroy@redifmail.com</div>
<div class="a" style="left:808.00px;top:499.03px;font-size:12.6px;line-height:20px;color:#333;font-weight:normal;">₹0</div>
<div class="a" style="left:954.00px;top:499.03px;font-size:12.6px;line-height:20px;color:#333;font-weight:normal;">₹0</div>
<div class="a" style="left:1153px;top:501px;width:41px;height:19px;background:#00a65a;border-radius:3px"></div>
<div class="a" style="left:1159.00px;top:499.60px;font-size:9.8px;line-height:20px;color:#fff;font-weight:bold;">Active</div>
<div class="a" style="left:1223px;top:498px;width:74px;height:34px;background:#3c8dbc;border:1px solid #367fa9;border-radius:3px"></div>
<div class="a" style="left:1235.50px;top:506.25px;font-size:13.7px;line-height:20px;color:#fff;font-weight:normal;">Action</div>
<svg class="a" style="left:1276.5px;top:514px;" width="7.5" height="4" viewBox="0 0 8 4"><path d="M0 0 H8 L4 4 Z" fill="#fff"/></svg>
<div class="a" style="left:256px;top:541px;width:1067px;height:50px;background:#f9f9f9"></div>
<div class="a" style="left:256px;top:591px;width:1067px;height:1px;background:#f4f4f4"></div>
<div class="a" style="left:268px;top:550px;width:22px;height:22px;border:1px solid #d3cfc8"></div>
<div class="a" style="left:311.00px;top:550.39px;font-size:13.3px;line-height:20px;color:#333;font-weight:normal;">Walter Scott</div>
<div class="a" style="left:466.00px;top:550.03px;font-size:12.6px;line-height:20px;color:#333;font-weight:normal;">9745454787454</div>
<div class="a" style="left:595.00px;top:550.39px;font-size:13.3px;line-height:20px;color:#333;font-weight:normal;">walterscott@gmail.com</div>
<div class="a" style="left:808.00px;top:550.03px;font-size:12.6px;line-height:20px;color:#333;font-weight:normal;">₹ 6600.00</div>
<div class="a" style="left:954.00px;top:550.03px;font-size:12.6px;line-height:20px;color:#333;font-weight:normal;">₹ 1100.00</div>
<div class="a" style="left:1153px;top:552px;width:41px;height:19px;background:#00a65a;border-radius:3px"></div>
<div class="a" style="left:1159.00px;top:550.60px;font-size:9.8px;line-height:20px;color:#fff;font-weight:bold;">Active</div>
<div class="a" style="left:1223px;top:549px;width:74px;height:34px;background:#3c8dbc;border:1px solid #367fa9;border-radius:3px"></div>
<div class="a" style="left:1235.50px;top:557.25px;font-size:13.7px;line-height:20px;color:#fff;font-weight:normal;">Action</div>
<svg class="a" style="left:1276.5px;top:565px;" width="7.5" height="4" viewBox="0 0 8 4"><path d="M0 0 H8 L4 4 Z" fill="#fff"/></svg>
<div class="a" style="left:256px;top:592px;width:1067px;height:50px;background:#fff"></div>
<div class="a" style="left:256px;top:642px;width:1067px;height:1px;background:#f4f4f4"></div>
<div class="a" style="left:268px;top:601px;width:22px;height:22px;border:1px solid #d3cfc8"></div>
<div class="a" style="left:311.00px;top:601.39px;font-size:13.3px;line-height:20px;color:#333;font-weight:normal;">Krishna Patil</div>
<div class="a" style="left:466.00px;top:601.03px;font-size:12.6px;line-height:20px;color:#333;font-weight:normal;">9844545544</div>
<div class="a" style="left:595.00px;top:601.39px;font-size:13.3px;line-height:20px;color:#333;font-weight:normal;">krishnapatil@gmail.com</div>
<div class="a" style="left:808.00px;top:601.03px;font-size:12.6px;line-height:20px;color:#333;font-weight:normal;">₹ 2510.00</div>
<div class="a" style="left:954.00px;top:601.03px;font-size:12.6px;line-height:20px;color:#333;font-weight:normal;">₹ 1700.00</div>
<div class="a" style="left:1153px;top:603px;width:41px;height:19px;background:#00a65a;border-radius:3px"></div>
<div class="a" style="left:1159.00px;top:601.60px;font-size:9.8px;line-height:20px;color:#fff;font-weight:bold;">Active</div>
<div class="a" style="left:1223px;top:600px;width:74px;height:34px;background:#3c8dbc;border:1px solid #367fa9;border-radius:3px"></div>
<div class="a" style="left:1235.50px;top:608.25px;font-size:13.7px;line-height:20px;color:#fff;font-weight:normal;">Action</div>
<svg class="a" style="left:1276.5px;top:616px;" width="7.5" height="4" viewBox="0 0 8 4"><path d="M0 0 H8 L4 4 Z" fill="#fff"/></svg>
<div class="a" style="left:256px;top:235px;width:1px;height:408px;background:#f4f4f4"></div>
<div class="a" style="left:302px;top:235px;width:1px;height:408px;background:#f4f4f4"></div>
<div class="a" style="left:457px;top:235px;width:1px;height:408px;background:#f4f4f4"></div>
<div class="a" style="left:586px;top:235px;width:1px;height:408px;background:#f4f4f4"></div>
<div class="a" style="left:799px;top:235px;width:1px;height:408px;background:#f4f4f4"></div>
<div class="a" style="left:945px;top:235px;width:1px;height:408px;background:#f4f4f4"></div>
<div class="a" style="left:1144px;top:235px;width:1px;height:408px;background:#f4f4f4"></div>
<div class="a" style="left:1214px;top:235px;width:1px;height:408px;background:#f4f4f4"></div>
<div class="a" style="left:1322px;top:235px;width:1px;height:408px;background:#f4f4f4"></div>
<div class="a" style="left:1324px;top:194px;width:0px;height:0px;"></div>
<div class="a" style="left:255.00px;top:658.00px;font-size:13px;line-height:20px;color:#333;font-weight:normal;">Showing 1 to 8 of 8 entries</div>
<div class="a" style="left:1164px;top:679px;width:77px;height:34px;background:#fff;border:1px solid #ddd;border-radius:4px 0 0 4px"></div>
<div class="a" style="left:1240px;top:679px;width:32px;height:34px;background:#337ab7;border:1px solid #337ab7"></div>
<div class="a" style="left:1272px;top:679px;width:52px;height:34px;background:#fff;border:1px solid #ddd;border-left:0;border-radius:0 4px 4px 0"></div>
<div class="a" style="left:1177.00px;top:686.69px;font-size:13.3px;line-height:20px;color:#777;font-weight:normal;">Previous</div>
<div class="a" style="left:1253.50px;top:686.69px;font-size:13.3px;line-height:20px;color:#fff;font-weight:normal;">1</div>
<div class="a" style="left:1284.50px;top:686.69px;font-size:13.3px;line-height:20px;color:#777;font-weight:normal;">Next</div>
<div class="a" style="left:230px;top:777px;width:1119px;height:51px;background:#fff;border-top:1px solid #d2d6de"></div>
<div class="a" style="left:245.00px;top:793.91px;font-size:12.95px;line-height:20px;color:#444;font-weight:bold;">Copyright © 2019 All rights reserved.</div>
<div class="a" style="left:1124.00px;top:793.84px;font-size:13.15px;line-height:20px;color:#444;font-weight:bold;">Ultimate Inventory with POS -v1.6</div>
</body></html>
